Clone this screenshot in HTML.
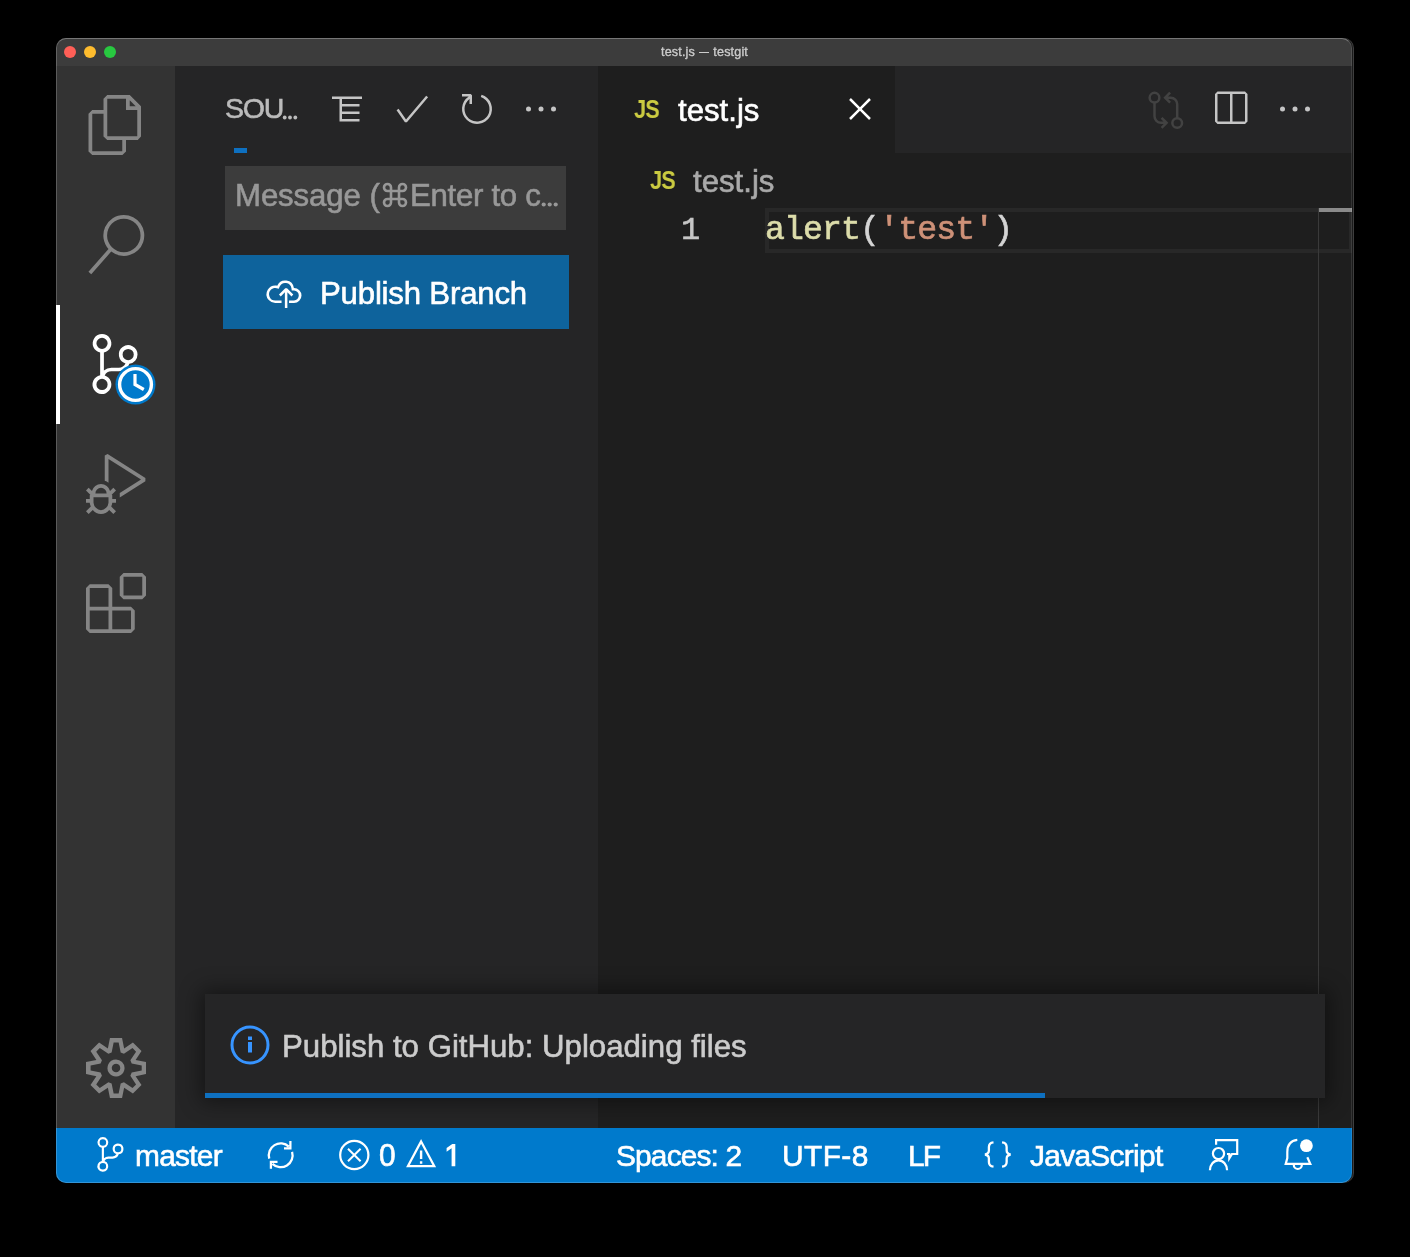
<!DOCTYPE html>
<html><head><meta charset="utf-8">
<style>
*{box-sizing:border-box;margin:0;padding:0}
html,body{width:1410px;height:1257px;background:#000;overflow:hidden}
body{font-family:"Liberation Sans",sans-serif;position:relative}
.abs{position:absolute}
#win{position:absolute;left:56px;top:38px;width:1296px;height:1145px;border-radius:10px;overflow:hidden;background:#1e1e1e}
#winborder{position:absolute;left:56px;top:38px;width:1296px;height:1145px;border-radius:10px;border:1px solid rgba(255,255,255,0.2);border-top-color:rgba(255,255,255,0.3);border-right-color:rgba(255,255,255,0.1);pointer-events:none}
#title{left:0;top:0;width:1297px;height:28px;background:#3c3c3c}
.tl{position:absolute;top:8px;width:12px;height:12px;border-radius:50%}
#ttext{left:0;width:1297px;top:7px;will-change:transform;text-align:center;color:#cccccc;font-size:12.600px;line-height:15px;-webkit-text-stroke:0.350px;letter-spacing:0.150px}
#act{left:0;top:28px;width:119px;height:1062px;background:#333333}
#side{left:119px;top:28px;width:423px;height:1062px;background:#252526}
#ed{left:542px;top:28px;width:755px;height:1062px;background:#1e1e1e}
#tabs{left:542px;top:28px;width:755px;height:87px;background:#252526}
#tab{left:542px;top:28px;width:297px;height:87px;background:#1e1e1e}
#status{left:0;top:1090px;width:1297px;height:55px;background:#007acc}
svg{position:absolute;overflow:visible}
.t{will-change:transform;position:absolute;white-space:nowrap;line-height:1;-webkit-text-stroke:0.600px}
</style></head><body>
<div style="position:absolute;left:66px;top:38px;width:1288px;height:1145px;border-radius:10px;background:#3e3e3e"></div>
<div style="position:absolute;left:66px;top:38px;width:1287px;height:1145px;border-radius:10px;background:#1a1a1a"></div>
<div id="win">
  <div id="title" class="abs"></div>
  <div class="tl" style="left:8px;background:#ff5f57"></div>
  <div class="tl" style="left:28px;background:#febc2e"></div>
  <div class="tl" style="left:48px;background:#28c840"></div>
  <div id="ttext" class="abs">test.js<span style="display:inline-block;width:10.300px;height:1.300px;background:#ccc;vertical-align:middle;margin:0 4.200px 0 3.900px;position:relative;top:-0.500px"></span>testgit</div>

  <div id="act" class="abs"></div>
  <div id="side" class="abs"></div>
  <div id="ed" class="abs"></div>
  <div id="tabs" class="abs"></div>
  <div id="tab" class="abs"></div>
  <div id="status" class="abs"></div>

  <!-- activity bar -->
  <div class="abs" style="left:0;top:267px;width:4px;height:119px;background:#fff"></div>
  <svg style="left:29.5px;top:56.5px" width="60" height="60" viewBox="0 0 24 24" fill="#858585"><path d="M17.5 0h-9L7 1.5V6H2.500L1 7.500v15.070L2.500 24h12.070L16 22.570V18h4.700l1.300-1.430V4.500L17.500 0zm0 2.120l2.380 2.380H17.500V2.120zm-3 20.380h-12v-15H7v9.070L8.500 18h6v4.500zm6-6h-12v-15H16V6h4.500v10.500z"/></svg>
  <svg style="left:29.700px;top:177.300px" width="59.500" height="59.500" viewBox="0 0 24 24" fill="#858585"><path d="M15.250 0a8.250 8.250 0 0 0-6.180 13.720L1 22.880l1.120 1 8.050-9.120A8.251 8.251 0 1 0 15.250.010V0zm0 15a6.750 6.750 0 1 1 0-13.500 6.750 6.750 0 0 1 0 13.500z"/></svg>
  <svg style="left:29px;top:296.200px" width="60" height="60" viewBox="0 0 24 24" fill="#ffffff"><path d="M21.007 8.222A3.738 3.738 0 0 0 15.045 5.200a3.737 3.737 0 0 0 1.156 6.583 2.988 2.988 0 0 1-2.668 1.670h-2.990a4.456 4.456 0 0 0-2.989 1.165V7.400a3.737 3.737 0 1 0-1.494 0v9.117a3.776 3.776 0 1 0 1.816.099 2.990 2.990 0 0 1 2.668-1.667h2.990a4.484 4.484 0 0 0 4.223-3.039 3.736 3.736 0 0 0 3.250-3.687zM4.565 3.738a2.242 2.242 0 1 1 4.484 0 2.242 2.242 0 0 1-4.484 0zm4.484 16.441a2.242 2.242 0 1 1-4.484 0 2.242 2.242 0 0 1 4.484 0zm8.221-9.715a2.242 2.242 0 1 1 0-4.485 2.242 2.242 0 0 1 0 4.485z"/></svg>
  <svg style="left:58.900px;top:326.300px" width="41" height="41" viewBox="0 0 41 41"><circle cx="20.500" cy="20.500" r="20" fill="#007acc"/><circle cx="20.500" cy="20.500" r="15.900" fill="none" stroke="#fff" stroke-width="3.400"/><path d="M20 10v10.500l8.800 5" fill="none" stroke="#fff" stroke-width="3.200"/></svg>
  <svg style="left:29.500px;top:416px" width="60" height="60" viewBox="0 0 24 24" fill="#858585"><path d="M10.940 13.500l-1.320 1.320a3.730 3.730 0 0 0-7.240 0L1.060 13.500 0 14.560l1.720 1.720-.220.220V18H0v1.500h1.500v.080c.077.489.214.966.410 1.420L0 22.940 1.060 24l1.650-1.650A4.308 4.308 0 0 0 6 24a4.310 4.310 0 0 0 3.290-1.650L10.940 24 12 22.940 10.090 21c.198-.464.336-.951.410-1.450v-.100H12V18h-1.500v-1.500l-.220-.220L12 14.560l-1.060-1.060zM6 13.500a2.250 2.250 0 0 1 2.250 2.250h-4.500A2.250 2.250 0 0 1 6 13.500zm3 6a3.330 3.330 0 0 1-3 3 3.330 3.330 0 0 1-3-3v-2.250h6v2.250zm14.760-9.900v1.260L13.500 17.370V15.600l8.500-5.370L9 2v9.460a5.070 5.070 0 0 0-1.500-.720V.630L8.640 0l15.120 9.600z"/></svg>
  <svg style="left:29.500px;top:535px" width="60" height="60" viewBox="0 0 24 24" fill="#858585"><path d="M13.500 1.500L15 0h7.500L24 1.500V9l-1.500 1.500H15L13.500 9V1.500zm1.500 0V9h7.500V1.500H15zM0 15V6l1.500-1.500H9L10.500 6v7.500H18l1.500 1.500v7.500L18 24H1.500L0 22.500V15zm9-1.500V6H1.500v7.500H9zM9 15H1.500v7.500H9V15zm1.500 7.500H18V15h-7.500v7.500z"/></svg>
  <svg style="left:29.500px;top:1000px" width="60" height="60" viewBox="0 0 24 24" fill="#858585"><path fill-rule="evenodd" d="M19.850 8.750l4.150.830v4.840l-4.150.830 2.350 3.520-3.430 3.430-3.520-2.350-.830 4.150H9.580l-.830-4.150-3.520 2.350-3.430-3.430 2.350-3.520L0 14.420V9.580l4.150-.830L1.800 5.230 5.230 1.800l3.520 2.350L9.580 0h4.840l.830 4.150 3.520-2.350 3.430 3.430-2.350 3.520zm-1.570 5.070l4-.810v-2l-4-.810-.540-1.300 2.290-3.430-1.430-1.430-3.430 2.290-1.300-.540-.810-4h-2l-.810 4-1.300.540-3.430-2.290-1.430 1.430L6.380 8.900l-.540 1.300-4 .810v2l4 .810.540 1.300-2.290 3.430 1.430 1.430 3.430-2.290 1.300.540.810 4h2l.810-4 1.300-.540 3.430 2.290 1.430-1.430-2.290-3.430.540-1.300zm-8.186-4.672A3.430 3.430 0 0 1 12 8.570 3.440 3.440 0 0 1 15.430 12a3.430 3.430 0 1 1-5.336-2.852zm.956 4.274c.281.188.612.288.950.288A1.700 1.700 0 0 0 13.710 12a1.710 1.710 0 1 0-2.660 1.422z"/></svg>

  <!-- sidebar -->
  <div id="sou" class="t" style="left:168.500px;top:56px;font-size:28.500px;color:#bbbbbb;letter-spacing:-1.200px">SOU</div>
  <svg style="left:226px;top:77px" width="16" height="5" viewBox="0 0 16 5" fill="#bbbbbb"><circle cx="2.700" cy="2.500" r="1.900"/><circle cx="8" cy="2.500" r="1.900"/><circle cx="13.300" cy="2.500" r="1.900"/></svg>
  <svg style="left:271px;top:51px" width="40" height="40" viewBox="0 0 16 16" fill="none" stroke="#c5c5c5" stroke-width="1"><path d="M2 3.500h12M5.500 3.500V13M5.500 6.500h7.500M5.500 9.500h7.500M5.500 12.500h7.500"/></svg>
  <svg style="left:336px;top:51px" width="40" height="40" viewBox="0 0 16 16" fill="#c5c5c5"><path d="M14.431 3.323l-8.470 10-.790-.036-3.350-4.770.818-.574 2.978 4.240 8.051-9.506.764.646z"/></svg>
  <svg style="left:401px;top:51px" width="40" height="40" viewBox="0 0 16 16" fill="#c5c5c5"><path d="M4.681 3H2V2h3.500l.500.500V6H5V4a5 5 0 1 0 4.530-.761l.302-.954A6 6 0 1 1 4.681 3z"/></svg>
  <svg style="left:465px;top:51px" width="40" height="40" viewBox="0 0 16 16" fill="#c5c5c5"><circle cx="3" cy="8" r="1"/><circle cx="8" cy="8" r="1"/><circle cx="13" cy="8" r="1"/></svg>
  <div class="abs" style="left:178px;top:110px;width:13px;height:5px;background:#0e70c0"></div>
  <div class="abs" style="left:169px;top:128px;width:341px;height:64px;background:#3c3c3c"></div>
  <div id="msg" class="t" style="left:179px;letter-spacing:-0.1px;top:142px;font-size:31.200px;color:#989898">Message (</div>
  <div id="msg2" class="t" style="letter-spacing:-0.3px;left:354px;top:142px;font-size:31.200px;color:#989898">Enter to c</div>
  <svg style="left:326px;top:143.500px" width="26" height="26" viewBox="0 0 26 26" fill="none" stroke="#989898" stroke-width="2.600"><path d="M9 9h8v8H9zM9 9V5.500a3.500 3.500 0 1 0-3.500 3.500zM17 9h3.500a3.500 3.500 0 1 0-3.500-3.500zM17 17v3.500a3.500 3.500 0 1 0 3.500-3.500zM9 17H5.500a3.500 3.500 0 1 0 3.500 3.500z"/></svg>
  <svg style="left:485px;top:164px" width="18" height="5" viewBox="0 0 18 5" fill="#989898"><circle cx="2.700" cy="2.500" r="2.100"/><circle cx="8.700" cy="2.500" r="2.100"/><circle cx="14.700" cy="2.500" r="2.100"/></svg>
  <div class="abs" style="left:167px;top:217px;width:346px;height:74px;background:#0e639c"></div>
  <svg style="left:208px;top:234.500px" width="40" height="40" viewBox="0 0 16 16" fill="#ffffff"><path d="M11.956 6h.050a2.990 2.990 0 0 1 2.117.879 3.003 3.003 0 0 1 0 4.242 2.990 2.990 0 0 1-2.117.879h-1.995v-1h1.995a2.002 2.002 0 0 0 0-4h-.914l-.123-.857a2.490 2.490 0 0 0-2.126-2.122A2.478 2.478 0 0 0 6.231 5.500l-.333.762-.809-.189A2.490 2.490 0 0 0 4.523 6c-.662 0-1.297.263-1.764.732A2.503 2.503 0 0 0 4.523 11h2.494v1H4.523a3.486 3.486 0 0 1-2.628-1.160 3.502 3.502 0 0 1-.400-4.136A3.496 3.496 0 0 1 4.523 5c.262 0 .524.030.780.090a3.491 3.491 0 0 1 3.680-2.058A3.490 3.490 0 0 1 11.955 6zM6.706 9.354l-.708-.708 2.500-2.500h.707l2.500 2.500-.707.708L9.350 7.707V14h-1V7.707L6.705 9.354z"/></svg>
  <div id="pub" class="t" style="letter-spacing:-0.2px;left:264px;top:240px;font-size:31.200px;color:#ffffff">Publish Branch</div>

  <!-- editor -->
  <div id="tabjs" class="t" style="left:578px;top:58px;font-size:26.500px;font-weight:bold;color:#cbcb41;letter-spacing:-1px;transform:scaleX(0.82);transform-origin:0 0;-webkit-text-stroke:0">JS</div>
  <div id="tabname" class="t" style="left:622px;top:57px;font-size:31.200px;color:#ffffff">test.js</div>
  <svg style="left:784px;top:51px" width="40" height="40" viewBox="0 0 16 16" fill="#ffffff"><path d="M8 8.707l3.646 3.647.708-.707L8.707 8l3.647-3.646-.707-.708L8 7.293 4.354 3.646l-.707.708L7.293 8l-3.646 3.646.707.708L8 8.707z"/></svg>
  <svg style="left:1084px;top:47px" width="50" height="50" viewBox="0 0 50 50" fill="none" stroke="#424242" stroke-width="2.500"><circle cx="14.500" cy="12.700" r="4.850"/><circle cx="37.200" cy="38" r="4.850"/><path d="M14.500 17.600V31.300A6.500 6.500 0 0 0 21 37.800H26M21.600 32.800L26.600 37.800L21.600 42.800M37.200 33.100V19.200A6.500 6.500 0 0 0 30.700 12.700H25.700M30.100 7.700L25.100 12.700L30.100 17.700"/></svg>
  <svg style="left:1154.300px;top:51px" width="40" height="40" viewBox="0 0 16 16" fill="#c5c5c5"><path d="M14 1H3L2 2v11l1 1h11l1-1V2l-1-1zM8 13H3V2h5v11zm6 0H9V2h5v11z"/></svg>
  <svg style="left:1219px;top:51px" width="40" height="40" viewBox="0 0 16 16" fill="#c5c5c5"><circle cx="3" cy="8" r="1"/><circle cx="8" cy="8" r="1"/><circle cx="13" cy="8" r="1"/></svg>
  <div id="bcjs" class="t" style="left:593.500px;top:128.500px;font-size:26.500px;font-weight:bold;color:#cbcb41;letter-spacing:-1px;transform:scaleX(0.82);transform-origin:0 0;-webkit-text-stroke:0">JS</div>
  <div id="bcname" class="t" style="left:637px;top:128px;font-size:31.200px;color:#a9a9a9">test.js</div>
  <div class="abs" style="left:709px;top:170px;width:588px;height:45.300px;border:4.500px solid #282828"></div>
  <div id="ln" class="t" style="left:625px;top:176.500px;font-family:'Liberation Mono',monospace;font-size:32px;color:#c6c6c6">1</div>
  <div id="code" class="t" style="-webkit-text-stroke:0.650px;letter-spacing:-0.900px;left:709px;top:176.300px;font-family:'Liberation Mono',monospace;font-size:33.200px;color:#d4d4d4"><span style="color:#dcdcaa">alert</span>(<span style="color:#ce9178">'test'</span>)</div>
  <div class="abs" style="left:1262px;top:170px;width:1px;height:920px;background:#3a3a3a"></div>
  <div class="abs" style="left:1263px;top:170px;width:34px;height:4px;background:#8a8a8a"></div>

  <!-- notification -->
  <div class="abs" style="left:149px;top:956px;width:1120px;height:104px;background:#252526;box-shadow:0 0 20px 4px rgba(0,0,0,0.45)"></div>
  <div class="abs" style="left:149px;top:1055px;width:840px;height:5px;background:#0e70c0"></div>
  <svg style="left:174px;top:987px" width="40" height="40" viewBox="0 0 40 40"><circle cx="20" cy="20" r="18" fill="none" stroke="#3794ff" stroke-width="3"/><rect x="18" y="17" width="4" height="10.500" fill="#3794ff"/><rect x="18" y="11.500" width="4" height="3.500" fill="#3794ff"/></svg>
  <div id="ntext" class="t" style="left:226px;top:993px;font-size:31.200px;color:#cccccc">Publish to GitHub: Uploading files</div>

  <!-- status bar -->
  <svg style="left:37.200px;top:1099.300px" width="34.800" height="34.800" viewBox="0 0 24 24" fill="#ffffff"><path d="M21.007 8.222A3.738 3.738 0 0 0 15.045 5.200a3.737 3.737 0 0 0 1.156 6.583 2.988 2.988 0 0 1-2.668 1.670h-2.990a4.456 4.456 0 0 0-2.989 1.165V7.400a3.737 3.737 0 1 0-1.494 0v9.117a3.776 3.776 0 1 0 1.816.099 2.990 2.990 0 0 1 2.668-1.667h2.990a4.484 4.484 0 0 0 4.223-3.039 3.736 3.736 0 0 0 3.250-3.687zM4.565 3.738a2.242 2.242 0 1 1 4.484 0 2.242 2.242 0 0 1-4.484 0zm4.484 16.441a2.242 2.242 0 1 1-4.484 0 2.242 2.242 0 0 1 4.484 0zm8.221-9.715a2.242 2.242 0 1 1 0-4.485 2.242 2.242 0 0 1 0 4.485z"/></svg>
  <div id="master" class="t" style="letter-spacing:-0.75px;left:79px;top:1102.500px;font-size:29.900px;color:#fff">master</div>
  <svg style="left:205px;top:1097px" width="40" height="40" viewBox="0 0 40 40" fill="none" stroke="#fff" stroke-width="2.250"><path d="M8.260 23.580A11.900 11.900 0 0 1 27.820 11.600M29.400 6.100V13.300H23M31.080 16.820A11.900 11.900 0 0 1 11.430 28.860M9.900 33.800V26.800H16.500"/></svg>
  <svg style="left:281px;top:1099.500px" width="34" height="34" viewBox="0 0 34 34" fill="none" stroke="#fff" stroke-width="2.200"><circle cx="17.300" cy="17" r="14.100"/><path d="M11 10.700l12.600 12.600M23.600 10.700l-12.600 12.600" stroke-width="2"/></svg>
  <div id="n0" class="t" style="transform:scaleY(1.045);transform-origin:0 84.650%;left:323px;top:1102.500px;font-size:29.900px;color:#fff">0</div>
  <svg style="left:348px;top:1099px" width="34" height="34" viewBox="0 0 34 34" fill="none" stroke="#fff" stroke-width="2.200"><path d="M17.100 4.400L30.300 29.200H3.900z" stroke-linejoin="miter"/><path d="M17.100 13.500v8.500M17.100 24.300v2.500" stroke-width="2.400"/></svg>
  <svg style="left:388px;top:1105px" width="12" height="24" viewBox="0 0 12 24" fill="#fff"><path d="M11.300 0.900V23.200H7.600V5.300L2.600 8.700V5L8.300 0.900Z"/></svg>
  <div id="spaces" class="t" style="letter-spacing:-0.85px;left:560px;top:1102.500px;font-size:29.900px;color:#fff">Spaces: 2</div>
  <div id="utf" class="t" style="letter-spacing:0.4px;left:726px;top:1102.500px;font-size:29.900px;color:#fff">UTF-8</div>
  <div id="lf" class="t" style="letter-spacing:-1.8px;left:852px;top:1102.500px;font-size:29.900px;color:#fff">LF</div>
  <svg style="left:919px;top:1092px" width="50" height="50" viewBox="0 0 50 50" fill="none" stroke="#fff" stroke-width="2.300"><path d="M18.500 12.300C15.500 12.600 13.900 14.500 13.900 17V20.500C13.900 22.500 12.500 24 10 24.500C12.500 25 13.900 26.500 13.900 28.500V32C13.900 34.500 15.500 36.400 18.500 36.700M27.050 12.300C30.050 12.600 31.650 14.500 31.650 17V20.500C31.650 22.500 33.050 24 35.550 24.500C33.050 25 31.650 26.500 31.650 28.500V32C31.650 34.500 30.050 36.400 27.050 36.700"/></svg>
  <div id="jsl" class="t" style="letter-spacing:-0.7px;left:974px;top:1102.500px;font-size:29.900px;color:#fff">JavaScript</div>
  <svg style="left:1139px;top:1087px" width="130" height="60" viewBox="0 0 130 60" fill="none" stroke="#fff" stroke-width="2.200"><circle cx="23.500" cy="28.600" r="5.600"/><path d="M14.900 45.300A8.600 9.900 0 0 1 32.100 45.300"/><path d="M21.100 19.800V15.050H42.200V29H37L34.300 33.400V29H32"/><path d="M102.300 14.800C96 15.500 92.300 20 92.300 27V33L90.700 38.900H115.300L112.300 32.300"/><path d="M98.800 40A4 4 0 0 0 106.800 40"/><circle cx="111.400" cy="20.700" r="6.400" fill="#fff" stroke="none"/></svg>
</div>
<div id="winborder"></div>
</body></html>
